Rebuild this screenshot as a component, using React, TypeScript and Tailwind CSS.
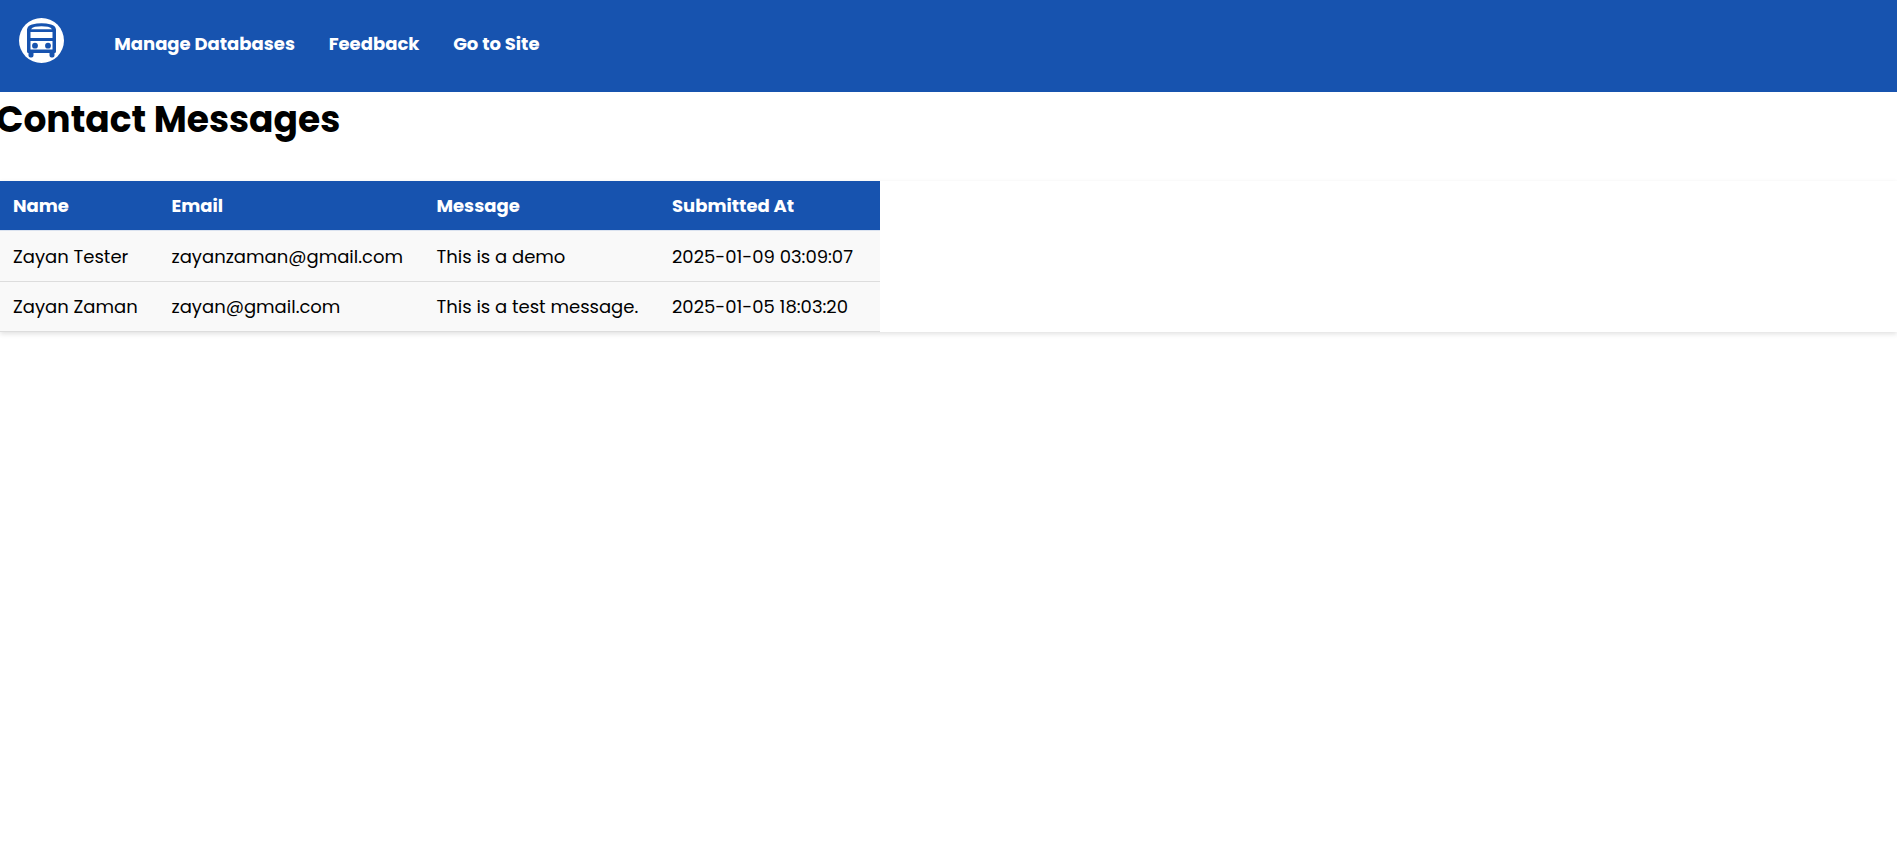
const links = ['Manage Databases', 'Feedback', 'Go to Site'];

const columns = [
  { label: 'Name', width: 'w-[158.5px]' },
  { label: 'Email', width: 'w-[265px]' },
  { label: 'Message', width: 'w-[235.5px]' },
  { label: 'Submitted At', width: 'w-[221px]' },
];

const rows = [
  {
    height: 'h-[51px]',
    cells: ['Zayan Tester', 'zayanzaman@gmail.com', 'This is a demo', '2025-01-09 03:09:07'],
  },
  {
    height: 'h-[50px]',
    cells: ['Zayan Zaman', 'zayan@gmail.com', 'This is a test message.', '2025-01-05 18:03:20'],
  },
];

function BusLogo() {
  return (
    <svg className="size-[45px] shrink-0" viewBox="0 0 45 45" aria-hidden="true">
      <circle cx="22.5" cy="22.5" r="22.5" fill="#fff" />
      <path
        fill="#1753af"
        d="M8 11.5Q8.500 7.500 13 6.500Q22.500 3.800 32 6.500Q36.500 7.500 37 11.500V33.500Q37 35 35.500 35V37.500Q35.500 39.500 33.500 39.500H32.500Q30.500 39.500 30.500 37.500V35H14.500V37.500Q14.500 39.500 12.500 39.500H11.500Q9.500 39.500 9.500 37.500V35Q8 35 8 33.500Z"
      />
      <path
        fill="#fff"
        d="M12 11.200Q13 9.300 16 8.700Q22.500 7.600 29 8.700Q32 9.300 33 11.200ZM11.500 14H33.500V20H11.500ZM11.500 23H33.500V31.500H11.500Z"
      />
      <circle cx="16" cy="27.700" r="2.900" fill="#1753af" />
      <circle cx="29" cy="27.700" r="2.900" fill="#1753af" />
    </svg>
  );
}

export default function App() {
  return (
    <div className="min-h-screen overflow-hidden bg-white font-['Poppins','Inter',sans-serif] text-black">
      <header className="flex h-[92px] items-start bg-[#1753af] pt-[18px] pl-[19px]">
        <BusLogo />
        <nav className="mt-[12px] ml-[50.25px] flex gap-[33.75px] text-[18px] leading-[27px] font-bold whitespace-nowrap text-white">
          {links.map((label) => (
            <a key={label} href="#">
              {label}
            </a>
          ))}
        </nav>
      </header>
      <main>
        <h1 className="-ml-[4px] h-[89px] pt-px text-[36px] leading-[54px] font-bold whitespace-nowrap">
          Contact Messages
        </h1>
        <div className="bg-white shadow-[0_2px_5px_rgba(0,0,0,0.12)]">
          <table className="w-[880px] table-fixed border-separate border-spacing-0 text-left text-[18px] leading-[27px] whitespace-nowrap">
            <thead>
              <tr className="h-[50px] bg-[#1753af] text-white">
                {columns.map((column) => (
                  <th key={column.label} className={`border-b border-[#dbe3f0] pl-[13px] ${column.width}`}>
                    {column.label}
                  </th>
                ))}
              </tr>
            </thead>
            <tbody>
              {rows.map((row) => (
                <tr key={row.cells[1]} className={`bg-[#f9f9f9] ${row.height}`}>
                  {row.cells.map((cell) => (
                    <td key={cell} className="border-b border-[#ddd] pl-[13px]">
                      {cell}
                    </td>
                  ))}
                </tr>
              ))}
            </tbody>
          </table>
        </div>
      </main>
    </div>
  );
}
